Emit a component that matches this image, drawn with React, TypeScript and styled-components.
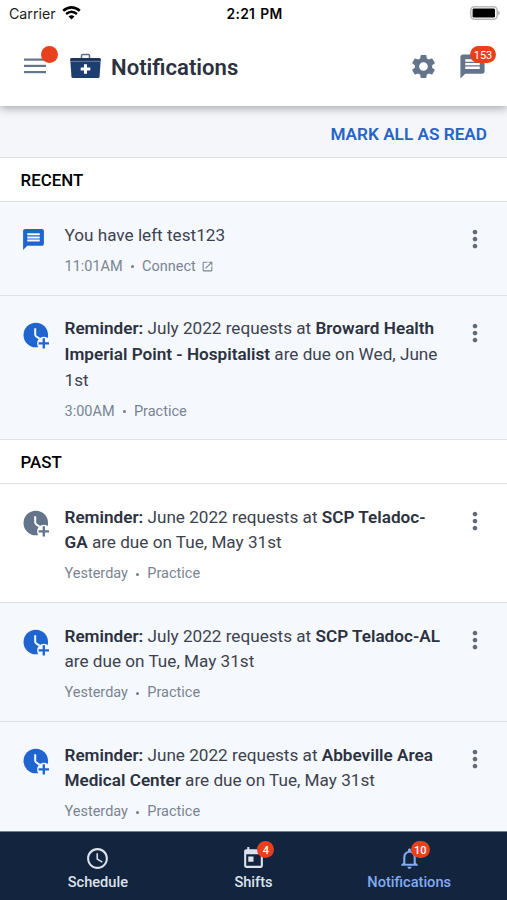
import React from "react";
import styled, { createGlobalStyle } from "styled-components";
import {
  MdAccessTime,
  MdMessage,
  MdMoreVert,
  MdNotificationsNone,
  MdOpenInNew,
  MdSettings,
  MdToday,
} from "react-icons/md";

const GlobalStyle = createGlobalStyle`
  * { box-sizing: border-box; }
  body {
    margin: 0;
    font-family: Roboto, "Liberation Sans", sans-serif;
    background: #fff;
  }
  svg { display: block; }
`;

const Screen = styled.div`
  display: flex;
  flex-direction: column;
  width: 507px;
  height: 900px;
  overflow: hidden;
`;

const Header = styled.header`
  position: relative;
  flex: none;
  height: 106px;
  background: #fff;
  box-shadow: 0 2px 9px rgba(40, 45, 55, 0.42);
`;

const StatusBar = styled.div`
  display: grid;
  grid-template-columns: 1fr auto 1fr;
  align-items: center;
  height: 28px;
  padding: 0 7px 0 9px;
  font-family: Inter, sans-serif;
  font-size: 14.2px;
  color: #1c1c1e;
`;

const Carrier = styled.div`
  display: flex;
  align-items: center;
  gap: 6px;
  margin-top: -2px;
`;

const Time = styled.div`
  margin-top: -1px;
  font-weight: 600;
  font-size: 13.8px;
  letter-spacing: 0.3px;
  word-spacing: 1.2px;
  color: #000;
`;

const BatterySlot = styled.div`
  justify-self: end;
  margin-top: -2px;
`;

const TitleBar = styled.div`
  display: flex;
  align-items: center;
  height: 76px;
  padding: 0 20px 0 24px;
`;

const Title = styled.h1`
  flex: 1;
  margin: 0 0 0 10px;
  padding-top: 1px;
  font-size: 22.1px;
  line-height: 30px;
  font-weight: 600;
  color: #2c3140;
`;

const IconWrap = styled.span<{ $gap?: number }>`
  position: relative;
  display: block;
  margin-left: ${(p) => p.$gap ?? 0}px;
  color: #64748b;
`;

const Badge = styled.span<{ $x: number; $y: number; $w: number; $h?: number }>`
  position: absolute;
  left: ${(p) => p.$x}px;
  top: ${(p) => p.$y}px;
  width: ${(p) => p.$w}px;
  height: ${(p) => p.$h ?? 17}px;
  border-radius: 9px;
  background: #e8401c;
  color: #fff;
  font-size: 11px;
  line-height: 19px;
  text-align: center;
`;

const Feed = styled.main`
  flex: 1;
  min-height: 0;
  overflow: hidden;
`;

const Actions = styled.div`
  display: flex;
  justify-content: flex-end;
  align-items: center;
  height: 51px;
  padding: 4px 20px 0;
  background: #f4f6fa;
`;

const MarkRead = styled.button`
  border: 0;
  padding: 0;
  background: none;
  font: 600 17.2px/24px Roboto, sans-serif;
  color: #2664c7;
`;

const SectionTitle = styled.h2`
  margin: 0;
  height: 44px;
  padding-left: 20.5px;
  border-top: 1px solid #dde1e7;
  background: #fff;
  font-size: 16.9px;
  line-height: 45px;
  font-weight: 500;
  color: #000;
`;

const Item = styled.article<{ $read?: boolean; $height: number }>`
  display: grid;
  grid-template-columns: 44px 380px 1fr;
  height: ${(p) => p.$height}px;
  padding: 20px 18px 0 20.5px;
  border-top: 1px solid #dde1e7;
  background: ${(p) => (p.$read ? "#fff" : "#f5f9fe")};
`;

const Leading = styled.div<{ $read?: boolean; $top: number }>`
  padding-top: ${(p) => p.$top}px;
  color: ${(p) => (p.$read ? "#64748b" : "#2065cf")};
`;

const Message = styled.p`
  margin: 0;
  padding-top: 0.5px;
  font-size: 17.15px;
  line-height: 25.8px;
  white-space: nowrap;
  color: #3d424e;
  strong {
    font-weight: 600;
    color: #2c3140;
  }
`;

const Meta = styled.div`
  display: flex;
  align-items: center;
  gap: 8.2px;
  margin-top: 8.3px;
  font-size: 14.5px;
  line-height: 20px;
  color: #7a8492;
  svg { margin-left: -3.5px; }
`;

const Dot = styled.i`
  width: 3px;
  height: 3px;
  border-radius: 50%;
  background: #737d8b;
`;

const More = styled.div`
  justify-self: end;
  padding-top: 3px;
  color: #616a78;
`;

const TabBar = styled.nav`
  display: grid;
  grid-template-columns: repeat(3, 1fr);
  flex: none;
  height: 69px;
  padding: 0 20px;
  border-top: 1px solid #76808d;
  background: #13243e;
`;

const Tab = styled.a<{ $active?: boolean }>`
  display: flex;
  flex-direction: column;
  align-items: center;
  padding-top: 14px;
  color: ${(p) => (p.$active ? "#83abf3" : "#dce3ed")};
  font-size: 14.6px;
  line-height: 20px;
  font-weight: 500;
`;

const TabIcon = styled.span`
  position: relative;
  height: 26px;
`;

const Wifi = () => (
  <svg width="19" height="14" viewBox="0 0 19 14" fill="none" stroke="#000">
    <path d="M1.2 4.8Q9.5-2 17.8 4.8" strokeWidth="2.7" />
    <path d="M4.1 8Q9.5 3.5 14.9 8" strokeWidth="2.5" />
    <path d="M9.5 13.5 6.5 10.4Q9.5 8 12.5 10.4Z" fill="#000" stroke="none" />
  </svg>
);

const Battery = () => (
  <svg width="30" height="14" viewBox="0 0 30 14">
    <rect x=".8" y=".8" width="26.4" height="12.4" rx="3.6" fill="#fff" stroke="#b8b8b8" strokeWidth="1.5" />
    <rect x="2.6" y="2.4" width="22.4" height="9.2" rx="1.4" fill="#000" />
    <path d="M28.2 4.5Q31.2 7 28.2 9.5Z" fill="#aaa" />
  </svg>
);

const MenuIcon = () => (
  <svg width="22" height="16" viewBox="0 0 22 16" fill="#64748b">
    <rect y="0.5" width="22" height="2.2" />
    <rect y="6.8" width="22" height="2.2" />
    <rect y="13" width="22" height="2.2" />
  </svg>
);

const MedicalBag = () => (
  <svg width="31" height="26" viewBox="0 0 31 26">
    <path d="M11.5 5V2.6Q11.5 1.4 12.7 1.4H18.3Q19.5 1.4 19.5 2.6V5" fill="none" stroke="#5b6c84" strokeWidth="1.5" />
    <path d="M1.5 5H29.5Q31 5 30.9 6.5L30.8 8H.2L.1 6.5Q0 5 1.5 5Z" fill="#1b355e" />
    <path d="M.4 8.2H30.6L29.6 23.5Q29.5 25 28 25H3Q1.5 25 1.4 23.5Z" fill="#1d3f70" />
    <path d="M.3 8.3H30.7" stroke="#66799a" strokeWidth=".8" />
    <path d="M15.5 11.2V20.8M10.7 16H20.3" stroke="#fff" strokeWidth="3" />
  </svg>
);

const ClockPlus = ({ halo }: { halo: string }) => (
  <svg width="30" height="30" viewBox="0 0 30 30" fill="none">
    <circle cx="14.8" cy="14" r="12.3" fill="currentColor" />
    <path d="M14.2 7.2V13.6Q14.2 14.6 15 15.2L18.5 17.6" stroke={halo} strokeWidth="2" />
    <circle cx="22.8" cy="22.4" r="6.7" fill={halo} />
    <path d="M22.8 17.2V27.6M17.6 22.4H28" stroke="currentColor" strokeWidth="2.3" />
  </svg>
);

const ClockSlot = styled.div`
  margin-left: 0.3px;
`;

type NoticeProps = {
  kind?: "message" | "reminder";
  read?: boolean;
  height: number;
  when: string;
  source: string;
  children: React.ReactNode;
};

const Notice = ({ kind = "reminder", read, height, when, source, children }: NoticeProps) => (
  <Item $read={read} $height={height}>
    <Leading $read={read} $top={kind === "message" ? 4.5 : 5}>
      {kind === "message" ? (
        <MdMessage size={25} />
      ) : (
        <ClockSlot>
          <ClockPlus halo={read ? "#fff" : "#f5f9fe"} />
        </ClockSlot>
      )}
    </Leading>
    <div>
      <Message>{children}</Message>
      <Meta>
        <span>{when}</span>
        <Dot />
        <span>{source}</span>
        {kind === "message" && <MdOpenInNew size={13} />}
      </Meta>
    </div>
    <More>
      <MdMoreVert size={28} />
    </More>
  </Item>
);

export default function App() {
  return (
    <Screen>
      <GlobalStyle />
      <Header>
        <StatusBar>
          <Carrier>
            Carrier <Wifi />
          </Carrier>
          <Time>2:21 PM</Time>
          <BatterySlot>
            <Battery />
          </BatterySlot>
        </StatusBar>
        <TitleBar>
          <IconWrap>
            <MenuIcon />
            <Badge $x={17} $y={-12} $w={17} />
          </IconWrap>
          <IconWrap $gap={24}>
            <MedicalBag />
          </IconWrap>
          <Title>Notifications</Title>
          <IconWrap>
            <MdSettings size={29} />
          </IconWrap>
          <IconWrap $gap={20}>
            <MdMessage size={29} />
            <Badge $x={12} $y={-5.5} $w={26}>153</Badge>
          </IconWrap>
        </TitleBar>
      </Header>
      <Feed>
        <Actions>
          <MarkRead>MARK ALL AS READ</MarkRead>
        </Actions>
        <SectionTitle>RECENT</SectionTitle>
        <Notice kind="message" height={93.5} when="11:01AM" source="Connect">
          You have left test123
        </Notice>
        <Notice height={144.5} when="3:00AM" source="Practice">
          <strong>Reminder:</strong> July 2022 requests at <strong>Broward Health<br />
          Imperial Point - Hospitalist</strong> are due on Wed, June<br />
          1st
        </Notice>
        <SectionTitle>PAST</SectionTitle>
        <Notice read height={119} when="Yesterday" source="Practice">
          <strong>Reminder:</strong> June 2022 requests at <strong>SCP Teladoc-<br />GA</strong> are due on Tue, May 31st
        </Notice>
        <Notice height={119} when="Yesterday" source="Practice">
          <strong>Reminder:</strong> July 2022 requests at <strong>SCP Teladoc-AL</strong>
          <br />
          are due on Tue, May 31st
        </Notice>
        <Notice height={119} when="Yesterday" source="Practice">
          <strong>Reminder:</strong> June 2022 requests at <strong>Abbeville Area<br />Medical Center</strong> are due on Tue, May 31st
        </Notice>
      </Feed>
      <TabBar>
        <Tab>
          <TabIcon>
            <MdAccessTime size={25} />
          </TabIcon>
          Schedule
        </Tab>
        <Tab>
          <TabIcon>
            <MdToday size={25} />
            <Badge $x={16.5} $y={-5} $w={17}>4</Badge>
          </TabIcon>
          Shifts
        </Tab>
        <Tab $active>
          <TabIcon>
            <MdNotificationsNone size={25} />
            <Badge $x={14} $y={-5} $w={19}>10</Badge>
          </TabIcon>
          Notifications
        </Tab>
      </TabBar>
    </Screen>
  );
}
